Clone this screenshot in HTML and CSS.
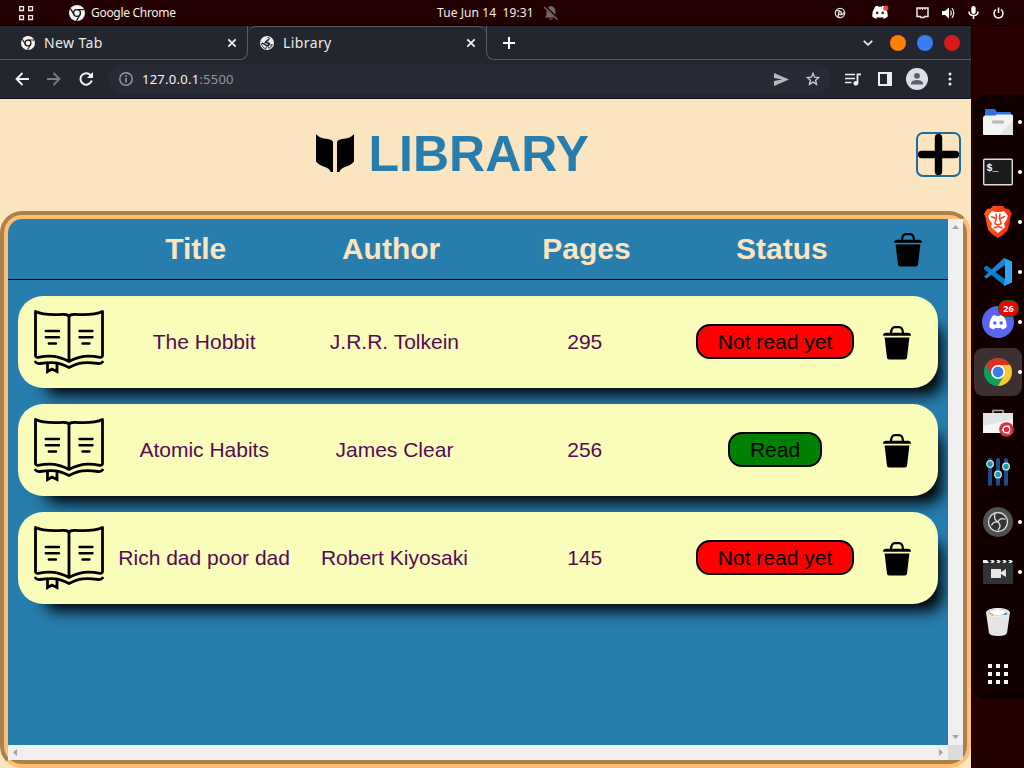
FILE: index.html
```html
<!DOCTYPE html>
<html lang="en">
<head>
<meta charset="utf-8">
<title>Library</title>
<link rel="stylesheet" href="styles.css">
</head>
<body>
<svg class="defs" aria-hidden="true">
  <symbol id="trash" viewBox="0 0 28 34">
    <path d="M8 8Q8 1.200 12 1.200H16Q20 1.200 20 8" fill="none" stroke="#000" stroke-width="2.200"/>
    <path d="M0 9.800Q0 6.800 3 6.800H25Q28 6.800 28 9.800ZM1.600 11.500H26.400L24 31.700Q23.700 33.500 22 33.500H6Q4.300 33.500 4 31.700Z"/>
  </symbol>
  <symbol id="book" viewBox="0 0 70 65">
    <g fill="none" stroke="#000" stroke-width="2.800" stroke-linecap="round" stroke-linejoin="round">
      <path d="M1.500 1.500C12 6.500 25 4 31 4.500Q34 4.500 35 6.500Q36 4.500 39 4.500C45 4 58 6.500 68.500 1.500V45.500Q68.500 47.500 66 47.300C53 45 46 46 35 51.500C24 46 17 45 4 47.300Q1.500 47.500 1.500 45.500ZM35 7V51"/>
      <path d="M1.500 52Q3 54 6 53.500C19 51.500 25 52.500 35 57.500C45 52.500 51 51.500 64 53.500Q67 54 68.500 52"/>
      <path d="M11.800 21H25M11.800 27.200H25M14.800 33.500H22M45.500 21H58.500M45.500 27.200H58.500M48.500 33.500H55.500" stroke-width="2.400"/>
      <path d="M13.500 54.500V61.500L18 59L23 61.500V54.500" stroke-linejoin="miter"/>
    </g>
  </symbol>
  <symbol id="chrome-mono" viewBox="0 0 16 16">
    <circle cx="8" cy="8" r="8" fill="#f4f4f4"/>
    <circle cx="8" cy="8" r="3.400" fill="none" stroke="#22151a" stroke-width="1.400"/>
    <path d="M8 4.600H15M5.100 9.800L1.500 3.700M10.900 9.800L7.500 15.700" stroke="#22151a" stroke-width="1.300"/>
  </symbol>
  <symbol id="close" viewBox="0 0 10 10"><path d="M1.300 1.300L8.700 8.700M8.700 1.300L1.300 8.700" stroke="#eee" stroke-width="1.800"/></symbol>
  <symbol id="discord" viewBox="0 0 20 16">
    <path d="M4.500 1.500Q6 .7 7.500 .6L8 1.600Q10 1.300 12 1.600L12.500 .6Q14 .7 15.500 1.500Q19 7 18.700 12.500Q16.500 14.500 14 15L13 13.300Q10 14 7 13.300L6 15Q3.500 14.500 1.300 12.500Q1 7 4.500 1.500Z" fill="#fff"/>
  </symbol>
</svg>

<header class="topbar">
  <svg class="apps" width="16" height="16" fill="none" stroke="#eee" stroke-width="1.300"><path d="M1.700 1.700h3.800v3.800h-3.800zM10.700 1.700h3.800v3.800h-3.800zM1.700 10.700h3.800v3.800h-3.800zM10.700 10.700h3.800v3.800h-3.800z"/></svg>
  <svg class="app-icon" width="16" height="16"><use href="#chrome-mono"/></svg>
  <span class="app-name">Google Chrome</span>
  <span class="clock">Tue Jun 14&nbsp; 19:31</span>
  <svg class="bell" width="16" height="16"><path d="M8 1Q12.500 2 12.500 7V10L14 12.500H2L3.500 10V7Q3.500 2 8 1ZM6 13.500H10Q8 16 6 13.500Z" fill="#756a6b"/><path d="M1 1L15 14" stroke="#250002" stroke-width="3"/><path d="M1 2L14.500 14.500" stroke="#756a6b" stroke-width="1.400"/></svg>
  <div class="tray">
    <svg width="12" height="12" fill="none" stroke="#ddd" stroke-width="1.300"><circle cx="6" cy="6" r="4.700"/><circle cx="6" cy="6" r="1.500"/><path d="M2 4Q4 3 7 4.700M10 5Q9.500 8 6.500 7.500M5 10.500Q3.500 8.500 4.700 6.500"/></svg>
    <svg class="tray-discord" width="18" height="15" viewBox="0 0 20 16"><use href="#discord"/><circle cx="6.800" cy="8.500" r="1.500" fill="#333"/><circle cx="13" cy="8.500" r="1.500" fill="#333"/><circle cx="16.500" cy="3" r="2.900" fill="#f04343"/></svg>
    <svg class="tray-net" width="13" height="12" fill="none" stroke="#eee" stroke-width="1.500"><path d="M1 1H12V9.500H8.500L8 10.500H5L4.500 9.500H1Z"/><path d="M4 1V3M6.500 1V3M9 1V3" stroke-width="1"/></svg>
    <svg class="tray-vol" width="13" height="12"><path d="M0 4H3L7 .5V11.500L3 8H0Z" fill="#fff"/><path d="M8.500 3.500Q10 6 8.500 8.500M10 1Q13.500 6 10 11" fill="none" stroke="#ddd" stroke-width="1.300"/></svg>
    <svg class="tray-mic" width="11" height="13"><rect x="3.300" width="4.400" height="8" rx="2.200" fill="#fff"/><path d="M1 5.500Q1 9.500 5.500 9.500Q10 9.500 10 5.500M5.500 9.500V13" fill="none" stroke="#fff" stroke-width="1.500"/></svg>
    <svg class="tray-power" width="11" height="12" fill="none" stroke="#fff" stroke-width="1.500"><path d="M3 2.500Q1 4 1 6.500Q1.500 10.800 5.500 11Q9.500 10.800 10 6.500Q10 4 8 2.500M5.500 .5V6"/></svg>
  </div>
</header>

<div class="desktop">
  <section class="window">
    <div class="tabs">
      <div class="tab tab-idle">
        <svg width="14" height="14"><use href="#chrome-mono"/></svg>
        <span class="tab-title">New Tab</span>
        <svg class="tab-close" width="10" height="10"><use href="#close"/></svg>
      </div>
      <div class="tab tab-active">
        <svg width="14" height="14"><circle cx="7" cy="7" r="7" fill="#eee"/><path d="M7.500 1.500L9.500 2L8.800 4H7V5.500H5.500V7H9.500V9H11L12.300 8.500Q11.500 11.500 9 12.300L8 11V9.500H6L4.500 7.500H1.700Q1.500 9 2.500 10.500Q4 12.500 6.300 12.500V10.500" fill="none" stroke="#23262e" stroke-width=".9"/><path d="M8.500 3.500L5.500 6.200L8.500 7.200V9.500H6.500L2 7" fill="none" stroke="#23262e" stroke-width="1.300"/></svg>
        <span class="tab-title">Library</span>
        <svg class="tab-close" width="10" height="10"><use href="#close"/></svg>
      </div>
      <div class="tab-rest">
        <svg width="12" height="12"><path d="M6 0V12M0 6H12" stroke="#fff" stroke-width="2"/></svg>
        <div class="controls">
          <svg class="chevron" width="10" height="6"><path d="M.7 .8L5 4.800L9.300 .8" fill="none" stroke="#eee" stroke-width="1.700"/></svg>
          <i class="ball orange"></i><i class="ball blue"></i><i class="ball red"></i>
        </div>
      </div>
    </div>
    <div class="toolbar">
      <svg class="nav" width="14" height="14" fill="none" stroke="#f4f4f4" stroke-width="1.800"><path d="M14 7H1.500M7.500 1L1.500 7L7.500 13"/></svg>
      <svg class="nav" width="14" height="14" fill="none" stroke="#7b7d82" stroke-width="1.800"><path d="M0 7H12.500M6.500 1L12.500 7L6.500 13"/></svg>
      <svg class="nav" width="14" height="14"><path d="M11.500 3.200A5.700 5.700 0 1 0 12.700 8.500" fill="none" stroke="#f4f4f4" stroke-width="2"/><path d="M14 0V6H8Z" fill="#f4f4f4"/></svg>
      <div class="omnibox">
        <svg width="14" height="14" fill="none" stroke="#9a9ca4" stroke-width="1.400"><circle cx="7" cy="7" r="6.200"/><path d="M7 6V10.500M7 3.300V4.900" stroke-width="1.600"/></svg>
        <span class="url">127.0.0.1<span class="port">:5500</span></span>
        <svg class="send" width="15" height="13"><path d="M0 0L15 6.500L0 13V8L8 6.500L0 5Z" fill="#b8b9bd"/></svg>
        <svg class="star" width="14" height="14" fill="none" stroke="#cfd0d2" stroke-width="1.300"><path d="M7 1.300L8.600 5.200L12.800 5.500L9.600 8.200L10.600 12.300L7 10.100L3.400 12.300L4.400 8.200L1.200 5.500L5.400 5.200Z"/></svg>
      </div>
      <svg class="media" width="17" height="13"><path d="M0 1.500H10M0 5.500H10M0 9.500H6.500" stroke="#eee" stroke-width="1.700"/><path d="M16 1.300H12.500V10" fill="none" stroke="#eee" stroke-width="1.800"/><circle cx="10.800" cy="10.300" r="2.400" fill="#eee"/></svg>
      <svg class="panel" width="14" height="14"><path d="M0 0H14V14H0ZM2 2V12H9V2Z" fill="#eee" fill-rule="evenodd"/></svg>
      <svg class="avatar" width="22" height="22"><circle cx="11" cy="11" r="11" fill="#dce0e6"/><circle cx="11" cy="7.800" r="2.900" fill="#566174"/><path d="M5 16.500V15Q6 12 11 12Q16 12 17 15V16.500Z" fill="#566174"/></svg>
      <svg class="more" width="4" height="14" fill="#eee"><circle cx="2" cy="2" r="1.500"/><circle cx="2" cy="7" r="1.500"/><circle cx="2" cy="12" r="1.500"/></svg>
    </div>

    <main class="page">
      <div class="heading">
        <svg class="logo" width="38" height="38"><path d="M0 0Q3 4 10 4.800Q17 5.500 17 8.500V38H14.500Q14 35 9 33Q3 31 0 27.500ZM38 0Q35 4 28 4.800Q21 5.500 21 8.500V38H23.500Q24 35 29 33Q35 31 38 27.500Z"/></svg>
        <h1>LIBRARY</h1>
        <button class="add" aria-label="Add book"><svg width="41" height="41"><path d="M20.500 3.500V37.500M3.500 20.500H37.500" stroke="#000" stroke-width="7.400" stroke-linecap="round"/></svg></button>
      </div>
      <div class="shelf">
        <div class="books">
          <div class="columns">
            <span></span><b>Title</b><b>Author</b><b>Pages</b><b>Status</b><svg width="28" height="34"><use href="#trash"/></svg>
          </div>
          <div class="list">
            <article class="row"><svg width="70" height="65"><use href="#book"/></svg><span>The Hobbit</span><span>J.R.R. Tolkein</span><span>295</span><button class="status unread">Not read yet</button><svg width="28" height="34"><use href="#trash"/></svg></article>
            <article class="row"><svg width="70" height="65"><use href="#book"/></svg><span>Atomic Habits</span><span>James Clear</span><span>256</span><button class="status read">Read</button><svg width="28" height="34"><use href="#trash"/></svg></article>
            <article class="row"><svg width="70" height="65"><use href="#book"/></svg><span>Rich dad poor dad</span><span>Robert Kiyosaki</span><span>145</span><button class="status unread">Not read yet</button><svg width="28" height="34"><use href="#trash"/></svg></article>
          </div>
        </div>
        <div class="bar vertical"><svg width="7" height="4"><path d="M0 4L3.500 0L7 4Z"/></svg><svg width="7" height="4"><path d="M0 0H7L3.500 4Z"/></svg></div>
        <div class="bar horizontal"><svg width="4" height="7"><path d="M4 0V7L0 3.500Z"/></svg><svg width="4" height="7"><path d="M0 0V7L4 3.500Z"/></svg></div>
        <div class="bar-corner"></div>
      </div>
    </main>
  </section>

  <aside class="side">
    <nav class="dock">
      <div class="slot running"><svg width="32" height="32"><path d="M3 4Q3 3 4 3H13L15 6H28Q29 6 29 7V14H3Z" fill="#2f6fe0"/><path d="M1 12Q1 9.500 3 9.500H13L15 8.500H30Q31 8.500 31 10V28Q31 29 30 29H2Q1 29 1 28Z" fill="#f4f4f4"/><path d="M31 15V29H17Z" fill="#e2e2e2"/><rect x="10" y="14.500" width="12" height="3" rx="1" fill="#b8b8b8"/></svg></div>
      <div class="slot running"><svg width="32" height="32"><rect x="1.700" y="3.200" width="28.600" height="25.600" rx="1" fill="#1b1b1b" stroke="#ddd" stroke-width="1.400"/><text class="prompt" x="4.500" y="15">$_</text></svg></div>
      <div class="slot running"><svg width="32" height="32"><defs><linearGradient id="brave"><stop stop-color="#ff5a20"/><stop offset="1" stop-color="#f62a0c"/></linearGradient></defs><path d="M11 0H21L23.500 2.500L27 3L30 8L28.500 11Q27 22 25 25Q22 28.500 16 32Q10 28.500 7 25Q5 22 3.500 11L2 8L5 3L8.500 2.500Z" fill="url(#brave)"/><path d="M10 5L13 6H19L22 5L26 10Q25 14 22 17.500L23 21Q20 24 16 27Q12 24 9 21L10 17.500Q7 14 6 10Z" fill="#fff"/><path d="M9 10.500L13.500 12.500M23 10.500L18.500 12.500M14 7.500L14.500 12L12.800 17.500L16 19L19.200 17.500L17.500 12L18 7.500M11.500 22L16 20.500L20.500 22" fill="none" stroke="#fb4316" stroke-width="1.500"/></svg></div>
      <div class="slot running"><svg width="32" height="32"><path d="M2 11.500L4.500 9.500L23 23V30L2 13Z" fill="#0878c8"/><path d="M2 20.500L22 2L23 9L4.500 22.500Z" fill="#1b83d4"/><path d="M22 2L30 5.500V26.500L22 30L23 22V10Z" fill="#2ba5f4"/></svg></div>
      <div class="slot running"><svg width="32" height="32"><circle cx="16" cy="16" r="16" fill="#5865f2"/><svg x="6" y="8.500" width="20" height="16" viewBox="0 0 20 16"><use href="#discord"/><circle cx="6.800" cy="8.500" r="1.800" fill="#5865f2"/><circle cx="13.200" cy="8.500" r="1.800" fill="#5865f2"/></svg></svg><span class="badge">26</span></div>
      <div class="slot running current"><svg width="32" height="32"><circle cx="16" cy="16" r="14" fill="#0ba05d"/><path d="M16 16L3.900 9A14 14 0 0 1 28.100 9Z" fill="#dd3025"/><path d="M16 9H28.100A14 14 0 0 1 16 30L22 19.500Z" fill="#fdc52f"/><path d="M3.900 9L10 19.500L16 9Z" fill="#dd3025"/><circle cx="16" cy="16" r="7" fill="#fff"/><circle cx="16" cy="16" r="5.400" fill="#3b7de8"/></svg></div>
      <div class="slot"><svg width="32" height="32"><path d="M11 8V4.500H21V8" fill="none" stroke="#aaa" stroke-width="1.600"/><path d="M1 7H31V27H1Z" fill="#e4e4e4"/><path d="M1 20L31 13V27H1Z" fill="#f5f5f5"/><circle cx="24.500" cy="23.500" r="7.300" fill="#dc3038"/><circle cx="24.500" cy="23.500" r="3.300" fill="none" stroke="#fff" stroke-width="1.200"/><g fill="#fff"><circle cx="20.800" cy="24" r="1.100"/><circle cx="26.500" cy="20.500" r="1.100"/><circle cx="26.500" cy="26.800" r="1.100"/></g></svg></div>
      <div class="slot"><svg width="32" height="32"><path d="M8 4V28M16 4V28M24 4V28" stroke="#1e4b8c" stroke-width="4" stroke-linecap="round"/><g fill="#1d9aa5" stroke="#d8eeee" stroke-width="1.200"><circle cx="8" cy="8" r="3.300"/><circle cx="16" cy="18.500" r="3.300"/><circle cx="24" cy="10.500" r="3.300"/></g></svg></div>
      <div class="slot running"><svg width="32" height="32"><circle cx="16" cy="16" r="15" fill="#505050"/><circle cx="16" cy="16" r="9.500" fill="#333" stroke="#ddd" stroke-width="1.300"/><path d="M13 8Q11 13 16 16Q18 11 23.500 13.500M16 16Q20 20 16 24M16 16Q11 15.500 9.500 19.500" fill="none" stroke="#ddd" stroke-width="1.300"/></svg></div>
      <div class="slot running"><svg width="32" height="32"><rect x="1" y="7" width="30" height="21" rx="1.500" fill="#303236"/><path d="M1 4H31V7H1Z" fill="#181818"/><path d="M1 4H5L7 7H1ZM8 4H11L13 5.500L11 7H8L10 5.500ZM14 4H17L19 5.500L17 7H14L16 5.500ZM20 4H23L25 5.500L23 7H20L22 5.500ZM26 4H29L31 5.500L29 7H26L28 5.500Z" fill="#eee"/><path d="M9 13H19V16L24 13V21L19 18V22H9Z" fill="#e6e6e6"/></svg></div>
      <div class="slot"><svg width="32" height="32"><path d="M4 6L7 27Q8 30 16 30Q24 30 25 27L28 6Z" fill="#e5e5e5"/><ellipse cx="16" cy="6.500" rx="11.500" ry="4" fill="#d5dcd9" stroke="#f4f4f4"/><path d="M7 6.500L11 9.500" stroke="#e8c040" stroke-width="2"/><path d="M21 7.500L25 8" stroke="#2b9c9c" stroke-width="2"/><path d="M8 6Q9 3.500 12 5Q14 2 18 4.500Q23 3.500 24 6.500Q16 12 8 6Z" fill="#fff"/></svg></div>
      <div class="slot"><svg width="32" height="32" fill="#fff"><path d="M6 6h4v4h-4zM14 6h4v4h-4zM22 6h4v4h-4zM6 14h4v4h-4zM14 14h4v4h-4zM22 14h4v4h-4zM6 22h4v4h-4zM14 22h4v4h-4zM22 22h4v4h-4z"/></svg></div>
    </nav>
  </aside>
</div>
</body>
</html>
```
FILE: styles.css
```css
* { box-sizing: border-box; }
body { margin: 0; width: 1024px; height: 768px; overflow: hidden; display: flex; flex-direction: column; background: #260001; font-family: "Liberation Sans", Arial, sans-serif; }
svg { display: block; flex: none; }
.defs { display: none; }

.topbar { height: 26px; flex: none; display: flex; align-items: center; background: #230001; border-bottom: 1px solid #080000; color: #f4f0f0; font: 12px/26px "Noto Sans", sans-serif; white-space: nowrap; }
.apps { margin-left: 18px; }
.app-icon { margin-left: 35px; }
.app-name { width: 346px; padding-left: 6px; letter-spacing: -.3px; }
.clock { width: 106px; padding-left: 6px; letter-spacing: .08px; }
.bell { margin-left: 6px; }
.tray { display: flex; align-items: center; margin-left: 275px; }
.tray-discord { margin-left: 25px; }
.tray-net { margin-left: 27px; }
.tray-vol { margin-left: 13px; }
.tray-mic { margin-left: 13px; }
.tray-power { margin-left: 14px; }

.desktop { flex: 1; min-height: 0; display: flex; }
.window { width: 971px; display: flex; flex-direction: column; }
.tabs { height: 34px; flex: none; display: flex; background: #23262e; }
.tab { display: flex; align-items: center; color: #ebebeb; font: 14px "Noto Sans", sans-serif; }
.tab-title { padding-left: 9px; letter-spacing: .4px; }
.tab-close { margin-left: auto; }
.tab-idle { width: 248px; padding: 0 10px 0 21px; border: solid #5a5d63; border-width: 0 1px 1px 0; border-bottom-right-radius: 8px; }
.tab-active { width: 238px; padding: 0 10px 2px 12px; border-top: 1px solid #5a5d63; border-radius: 8px 8px 0 0; }
.tab-rest { flex: 1; display: flex; align-items: center; justify-content: space-between; padding: 0 11px 0 16px; border: solid #5a5d63; border-width: 0 0 1px 1px; border-bottom-left-radius: 8px; }
.controls { display: flex; align-items: center; gap: 11px; }
.chevron { margin-right: 2px; }
.ball { width: 16px; height: 16px; border-radius: 50%; }
.chevron + .ball { margin-left: 4px; }
.orange { background: #ff8000; }
.blue { background: #377df5; }
.red { background: #d71b1b; }

.toolbar { height: 39px; flex: none; display: flex; align-items: center; background: #23262e; border-bottom: 1px solid #15161b; padding-left: 15px; }
.nav { margin-right: 18px; }
.omnibox { width: 723px; height: 30px; margin-left: -3px; padding-left: 11px; border-radius: 15px; display: flex; align-items: center; background: #282a35; }
.url { width: 641px; padding-left: 9px; color: #f5f5f5; font: 13px "Noto Sans", sans-serif; letter-spacing: .25px; }
.port { color: #94969d; }
.star { margin-left: 17px; }
.media { margin-left: 14px; }
.panel { margin-left: 16px; }
.avatar { margin-left: 14px; }
.more { margin-left: 20px; }

.page { flex: 1; background: #fbe5c0; }
.heading { height: 112px; padding: 0 10px 2px 316px; display: flex; align-items: center; }
.logo { margin-bottom: 2px; }
.heading h1 { margin: 0 auto 0 14.5px; color: #277dad; font-size: 50px; line-height: 56px; }
.add { width: 45px; height: 45px; padding: 0; border: 2px solid #1f6c99; border-radius: 7px; background: none; }

.shelf { height: 557px; border: 8px groove #ffbf73; border-radius: 22px; background: #277dad; display: grid; grid-template: 526px 15px / 940px 15px; }
.columns { height: 61px; display: grid; grid-template-columns: 90px repeat(4, 195.400px) 57px; align-items: center; justify-items: center; border-bottom: 1px solid #000; color: #fbe5c0; font-size: 30px; }
.list { display: flex; flex-direction: column; gap: 16px; padding: 16px 10px; }
.row { height: 92px; border-radius: 25px; background: #fafcba; box-shadow: 15px 18px 15px -11px #000; display: grid; grid-template-columns: 91px repeat(4, 190.300px) 54px; align-items: center; justify-items: center; color: #540a54; font-size: 21px; }
.row > svg:last-child, .columns > svg { margin-top: 1px; }
.status { height: 35px; margin-bottom: 1px; padding: 0 20px; border: 2px solid #000; border-radius: 14px; color: #000; font: 21px/31px "Liberation Sans", Arial, sans-serif; }
.row > svg:first-child { margin-left: 11px; }
.unread { background: #f00; }
.read { background: #008000; }

.bar { display: flex; align-items: center; justify-content: space-between; background: #f0f0f0; fill: #a3a3a3; }
.vertical { flex-direction: column; padding: 6px 0; }
.horizontal { padding: 0 5px; }
.bar-corner { background: #dcdcdc; }

.side { width: 53px; padding: 69px 0 0 1px; background: linear-gradient(#280001, #250001); border-left: 1px solid #0b0000; }
.dock { height: 604px; padding-top: 3px; border-radius: 12px 0 0 12px; background: #120000; }
.slot { position: relative; width: 48px; height: 48px; margin: 0 0 2px 1px; display: flex; align-items: center; justify-content: center; border-radius: 9px; }
.slot:last-child { margin-top: 4px; }
.running::after { content: ""; position: absolute; right: 0; top: 22px; width: 4px; height: 4px; border-radius: 50%; background: #fff; }
.current { background: #3c3030; }
.prompt { fill: #fff; font: bold 10px "Liberation Mono", monospace; }
.badge { position: absolute; right: 3px; top: 2px; width: 21px; height: 17px; border: 1px solid #0b6413; border-radius: 8px; background: #f00505; color: #fff; font: bold 9px/15px "Noto Sans", sans-serif; text-align: center; }
```
